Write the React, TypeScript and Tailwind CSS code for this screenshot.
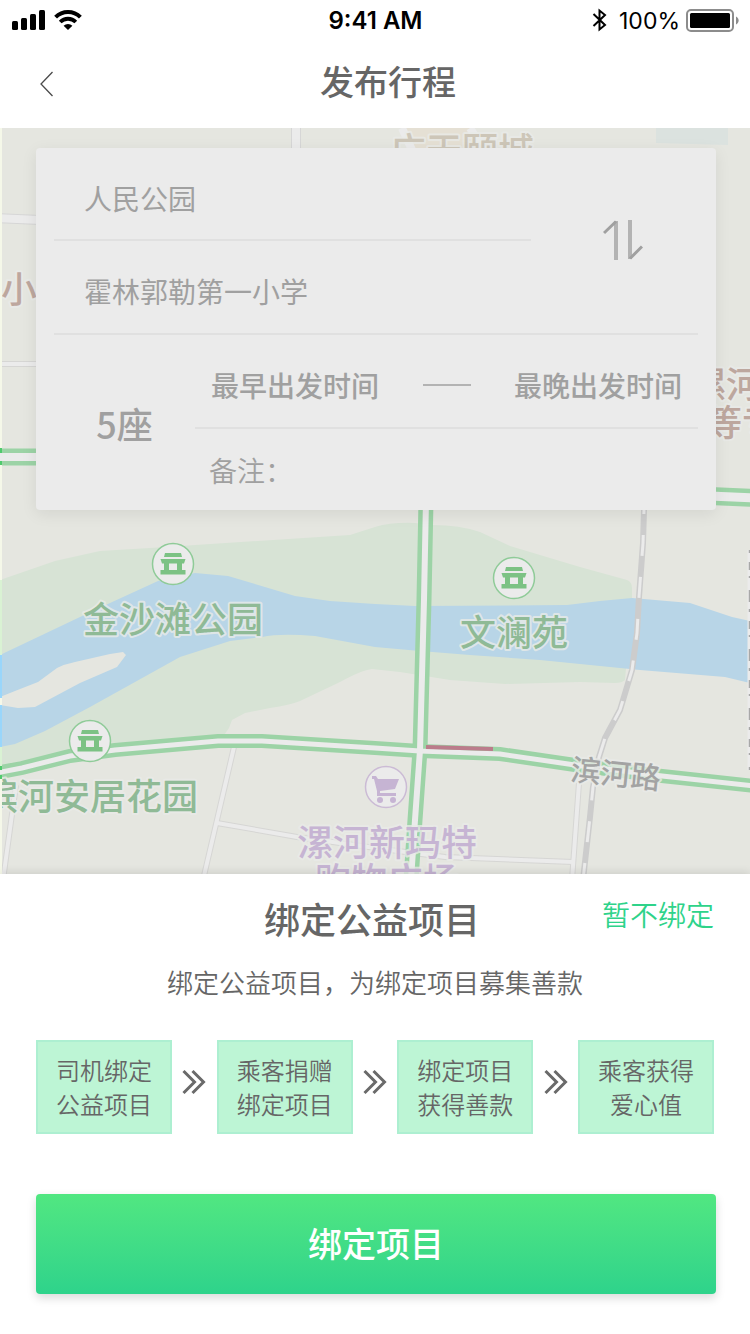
import type { ReactNode } from "react"

const steps = [
  ["司机绑定", "公益项目"],
  ["乘客捐赠", "绑定项目"],
  ["绑定项目", "获得善款"],
  ["乘客获得", "爱心值"],
]

const parks = [
  { x: 173, y: 564 },
  { x: 90, y: 741 },
  { x: 514, y: 578 },
]

const riverRoad =
  "M-4 773 L22 768 L70 756 L115 750 L218 741 L262 741 L375 748 L420 751 L500 754 L575 765 L662 776 L754 786"
const northRoad = "M426 500 L424 600 L420 750 L415 820 L411 880"
const railway =
  "M644 510 L643 543 L639 597 L637 633 L632 670 L620 710 L605 738 L599 757 L593 787 L590 817 L583 880"
const sideRoads =
  "M234 747 L203 880 M217 823 L297 837 L390 850 L445 857 L573 862 M579 783 L572 880 M16 785 L3 880 M-4 364 H40"

function SignalIcon() {
  return (
    <svg aria-hidden width="34" height="20" viewBox="0 0 34 20">
      <rect x="0" y="11" width="6" height="9" rx="1.5" />
      <rect x="9" y="8" width="6" height="12" rx="1.5" />
      <rect x="18" y="4" width="6" height="16" rx="1.5" />
      <rect x="27" y="0" width="6" height="20" rx="1.5" />
    </svg>
  )
}

function WifiIcon() {
  return (
    <svg aria-hidden width="28" height="20" viewBox="0 0 28 20">
      <path d="M1.6 7.2 A17.5 17.5 0 0 1 26.4 7.2" fill="none" stroke="#000" strokeWidth="4" />
      <path d="M6.2 12 A11 11 0 0 1 21.8 12" fill="none" stroke="#000" strokeWidth="3.8" />
      <path d="M9.6 15.8 A6.4 6.4 0 0 1 18.4 15.8 L14 20 Z" />
    </svg>
  )
}

function BluetoothIcon() {
  return (
    <svg aria-hidden width="15" height="24" viewBox="0 0 15 24">
      <path
        d="M1.5 6 L13 17 L7.5 21.5 V2.5 L13 7 L1.5 18"
        fill="none"
        stroke="#000"
        strokeWidth="2"
      />
    </svg>
  )
}

function BatteryIcon() {
  return (
    <svg aria-hidden width="53" height="23" viewBox="0 0 53 23">
      <rect x="1" y="1" width="46" height="21" rx="4" fill="none" stroke="#8c8c8c" strokeWidth="2" />
      <rect x="4" y="4" width="40" height="15" rx="1.5" />
      <path d="M50 7.5 C53.5 9 53.5 14 50 15.5 Z" fill="#8c8c8c" />
    </svg>
  )
}

function DoubleChevron() {
  return (
    <svg
      aria-hidden
      className="-mt-2.5 shrink-0"
      width="24"
      height="26"
      viewBox="0 0 24 26"
      fill="none"
      stroke="#6a6a6a"
      strokeWidth="3"
    >
      <path d="M1.5 2 L12.5 13 L1.5 24 M10.5 2 L21.5 13 L10.5 24" />
    </svg>
  )
}

function MapLabel({ x, y, fill, anchor = "middle", size = 36, rotate = 0, children }: {
  x: number
  y: number
  fill: string
  anchor?: "start" | "middle" | "end"
  size?: number
  rotate?: number
  children: ReactNode
}) {
  return (
    <text
      x={x}
      y={y}
      fill={fill}
      fontSize={size}
      fontWeight="500"
      textAnchor={anchor}
      stroke="#e9ebe8"
      strokeOpacity="0.8"
      strokeWidth="4"
      strokeLinejoin="round"
      paintOrder="stroke"
      transform={`rotate(${rotate} ${x} ${y})`}
    >
      {children}
    </text>
  )
}

function CityMap() {
  return (
    <svg
      role="img"
      aria-label="地图"
      className="absolute inset-0 h-full w-full"
      viewBox="0 128 750 746"
      preserveAspectRatio="xMidYMin slice"
    >
      <rect y="128" width="750" height="746" fill="#e5e6e0" />
      <path d="M402 128 H470 L484 150 H412 Z" fill="#e5e0d4" />
      <path d="M656 128 H728 V145 L656 143 Z" fill="#dbe2df" />

      {/* river banks, river, sandbar */}
      <path
        d="M0 580 L55 561 L100 551 L150 548 L350 535 L375 527 Q392 522 415 523 L432 525 Q460 525 480 532 L510 546 L540 555 L580 567 L627 580 Q632 582 632 588 V640 L626 668 L625 680 Q622 683 615 683 L580 682 L505 684 L450 680 L400 672 L372 669 Q362 670 340 682 L300 701 Q290 705 270 708 L245 713 L232 720 L229 728 L222 738 L110 752 L0 775 Z"
        fill="#d7e3d5"
      />
      <path
        d="M0 655 L80 617 L110 603 L158 581 L195 573 L228 576 L295 596 L330 601 L375 604 L415 606 L567 605 L600 601 L632 598 L690 603 L732 617 L750 621 V683 L725 677 L640 670 L540 660 L470 655 L420 651 L375 647 L315 636 Q280 633 262 637 L230 641 L180 657 L90 707 L45 731 L15 744 L0 747 Z"
        fill="#b8d5e7"
      />
      <path
        d="M0 697 L15 691 L38 682 L57 668 Q65 664 75 662 L110 654 L123 652 L126 655 L117 667 L80 683 L35 707 L18 708 L0 705 Z"
        fill="#e5e6e0"
      />

      {/* minor roads */}
      <g fill="none">
        <path d={sideRoads} stroke="#d6d6d4" strokeWidth="6" />
        <path d={sideRoads} stroke="#ebebeb" strokeWidth="4" />
        <path d="M296 120 V160 M-4 218 L40 220" stroke="#d6d6d6" strokeWidth="10" />
        <path d="M296 120 V160 M-4 218 L40 220" stroke="#ebebeb" strokeWidth="8" />
        <path d="M402 128 L412 150 M470 128 L484 150" stroke="#ebebeb" strokeWidth="8" />
      </g>

      {/* main roads with traffic */}
      <g fill="none" stroke="#9cd3a6">
        <path d={riverRoad} strokeWidth="14" />
        <path d={northRoad} strokeWidth="15" />
        <path d="M-4 457 H40" strokeWidth="17" />
        <path d="M710 496 L754 498" strokeWidth="18" />
      </g>
      <g fill="none" stroke="#ebebeb">
        <path d={riverRoad} strokeWidth="5" />
        <path d={northRoad} strokeWidth="6" />
        <path d="M-4 457 H40" strokeWidth="8" />
        <path d="M710 496 L754 498" strokeWidth="9" />
      </g>
      <path d="M426 747 L493 749" stroke="#bb7c8b" strokeWidth="4" />

      <g fill="none">
        <path d={railway} stroke="#cccccc" strokeWidth="6" />
        <path d={railway} stroke="#ebebeb" strokeWidth="3" strokeDasharray="21" strokeDashoffset="17" />
      </g>

      {/* street name running along the edge */}
      <path d="M749 550 V770" stroke="#ebebeb" strokeWidth="3" />
      <path d="M749.5 550 V770" stroke="#a8a8a8" strokeWidth="1.5" strokeDasharray="3 9 8 6 2 12 12 7" />

      {parks.map((p) => (
        <g key={`${p.x}-${p.y}`} transform={`translate(${p.x} ${p.y})`}>
          <circle r="20.5" fill="#ebebeb" stroke="#8fcb98" strokeWidth="1.5" />
          <path
            d="M-8 -11 H8 L9 -7 H-9 Z M-12.5 -5 H12.5 L11 -0.5 H9 V6 H12.5 V10.5 H-12.5 V6 H-9 V-0.5 H-11 Z M-4 -0.5 V6 H4 V-0.5 Z"
            fill="#7cc284"
            fillRule="evenodd"
          />
        </g>
      ))}

      <g transform="translate(386 787)">
        <circle r="20.5" fill="#ebebeb" stroke="#cbbbd5" strokeWidth="1.5" />
        <path d="M-14 -11 H-10 L-8 -8 H13 L9 2 L-6 4 V6 H10 V9 H-9 L-9 4 L-12 -8 H-14 Z" fill="#c6b4d3" />
        <circle cx="-6" cy="13" r="3" fill="#c6b4d3" />
        <circle cx="7" cy="13" r="3" fill="#c6b4d3" />
      </g>

      <MapLabel x={462} y={164} fill="#cdc6b8">广天颐城</MapLabel>
      <MapLabel x={1} y={303} fill="#bda79e" anchor="start">小</MapLabel>
      <MapLabel x={690} y={398} fill="#bda79e" anchor="start">漯河</MapLabel>
      <MapLabel x={706} y={436} fill="#bda79e" anchor="start">等专</MapLabel>
      <MapLabel x={173} y={633} fill="#8fba96">金沙滩公园</MapLabel>
      <MapLabel x={514} y={646} fill="#8fba96">文澜苑</MapLabel>
      <MapLabel x={198} y={810} fill="#8fba96" anchor="end">滨河安居花园</MapLabel>
      <MapLabel x={387} y={856} fill="#c6b4d3">漯河新玛特</MapLabel>
      <MapLabel x={387} y={894} fill="#c6b4d3">购物广场</MapLabel>
      <MapLabel x={570} y={780} fill="#a3a3a3" anchor="start" size={30} rotate={6}>滨河路</MapLabel>

      <path d="M1 128 V448 M1 465 V580 M1 698 V705 M1 779 V874" stroke="#f5f8e9" strokeWidth="2" />
      <path d="M1 580 V655 M1 747 V766" stroke="#d9f2d3" strokeWidth="2" />
      <path d="M1 655 V698 M1 705 V747" stroke="#99d6fb" strokeWidth="2" />
      <path d="M1 448 V453 M1 461 V465 M1 766 V770 M1 775 V779" stroke="#4fca6d" strokeWidth="2" />
    </svg>
  )
}

function StatusBar() {
  return (
    <div className="grid h-10 grid-cols-3 items-center pr-[11px] pl-3 font-['Inter',sans-serif] text-2xl text-black">
      <div className="flex items-center gap-2">
        <SignalIcon />
        <WifiIcon />
      </div>
      <span className="pt-0.5 text-center font-semibold">9:41 AM</span>
      <div className="flex items-center justify-end">
        <BluetoothIcon />
        <span className="pt-0.5 pr-1.5 pl-3 text-[23px]">100%</span>
        <BatteryIcon />
      </div>
    </div>
  )
}

function TripForm() {
  return (
    <form className="relative mt-5 mr-[34px] ml-9 rounded bg-[#ebebeb] text-[28px] text-[#a0a0a0] shadow-[0_4px_16px_rgb(0_0_0/0.08)]">
      <div className="mx-[18px] border-b-2 border-[#e0e0e0]">
        <div className="flex items-stretch">
          <div className="min-w-0 flex-1">
            <input
              aria-label="出发地"
              className="block h-[93px] w-full border-b-2 border-[#e0e0e0] pt-2 pl-[30px] outline-none"
              defaultValue="人民公园"
            />
            <input
              aria-label="目的地"
              className="block h-[92px] w-full pt-2 pl-[30px] outline-none"
              defaultValue="霍林郭勒第一小学"
            />
          </div>
          <button
            type="button"
            aria-label="交换出发地和目的地"
            className="flex w-[167px] items-center justify-center pl-4"
          >
            <svg aria-hidden width="40" height="42" viewBox="0 0 40 42" fill="none">
              <path d="M13 1 V40" stroke="#b3b3b3" strokeWidth="4" />
              <path d="M27 0 V39" stroke="#b3b3b3" strokeWidth="4" />
              <path d="M1 13 L13 1.5 M27 38.5 L39 26.5" stroke="#a0a0a0" strokeWidth="3" />
            </svg>
          </button>
        </div>
      </div>
      <div className="mx-[18px] flex">
        <button type="button" className="w-[141px] shrink-0 text-4xl font-medium">
          5座
        </button>
        <div className="min-w-0 flex-1">
          <div className="flex h-[94px] items-center justify-between border-b-2 border-[#e0e0e0] px-4 pt-2 font-medium">
            <button type="button">最早出发时间</button>
            <span className="h-0.5 w-12 bg-[#b3b3b3]" />
            <button type="button">最晚出发时间</button>
          </div>
          <div className="flex h-[81px] items-center pl-3.5 font-[350]">
            <label htmlFor="remark">备注：</label>
            <input id="remark" className="min-w-0 flex-1 outline-none" />
          </div>
        </div>
      </div>
    </form>
  )
}

export default function App() {
  return (
    <div className="flex min-h-screen flex-col bg-white font-['Noto_Sans_CJK_SC',sans-serif] text-[#666]">
      <StatusBar />
      <header className="flex h-[88px] items-center px-9">
        <button type="button" aria-label="返回" className="flex h-10 w-[26px] items-center pl-1">
          <svg aria-hidden width="14" height="26" viewBox="0 0 14 26" fill="none" stroke="#4a4a4a" strokeWidth="1.3">
            <path d="M12.5 1 L1 13 L12.5 25" />
          </svg>
        </button>
        <h1 className="flex-1 pb-2 text-center text-[34px] font-medium">发布行程</h1>
      </header>

      <main className="relative flex-1 overflow-hidden pb-20">
        <CityMap />
        <TripForm />
      </main>

      <section className="relative bg-white pt-4 pb-10 shadow-[0_-2px_8px_rgb(0_0_0/0.1)]">
        <div className="grid grid-cols-[1fr_auto_1fr] items-start pr-9 pl-[30px]">
          <h2 className="col-start-2 text-4xl leading-[56px] font-medium">绑定公益项目</h2>
          <button type="button" className="justify-self-end text-[28px] leading-[48px] font-[350] text-[#2ed38a]">
            暂不绑定
          </button>
        </div>
        <p className="mt-4 text-center text-[26px] leading-10 font-[350]">绑定公益项目，为绑定项目募集善款</p>

        <ol className="mt-[38px] flex items-center justify-between px-9">
          {steps.map(([first, second], i) => (
            <li key={first + second} className="contents">
              {i > 0 && <DoubleChevron />}
              <div className="flex h-[94px] w-[136px] flex-col items-center justify-center border-2 border-[#adefd1] bg-[#bdf5d5] text-2xl leading-[34px] font-[350]">
                <span>{first}</span>
                <span>{second}</span>
              </div>
            </li>
          ))}
        </ol>

        <div className="mt-[60px] pr-[34px] pl-9">
          <button
            type="button"
            className="h-[100px] w-full rounded bg-linear-to-b from-[#51e781] to-[#2ed38b] pb-1 text-[34px] font-medium text-white shadow-[0_4px_10px_rgb(0_0_0/0.15)]"
          >
            绑定项目
          </button>
        </div>
      </section>
    </div>
  )
}
